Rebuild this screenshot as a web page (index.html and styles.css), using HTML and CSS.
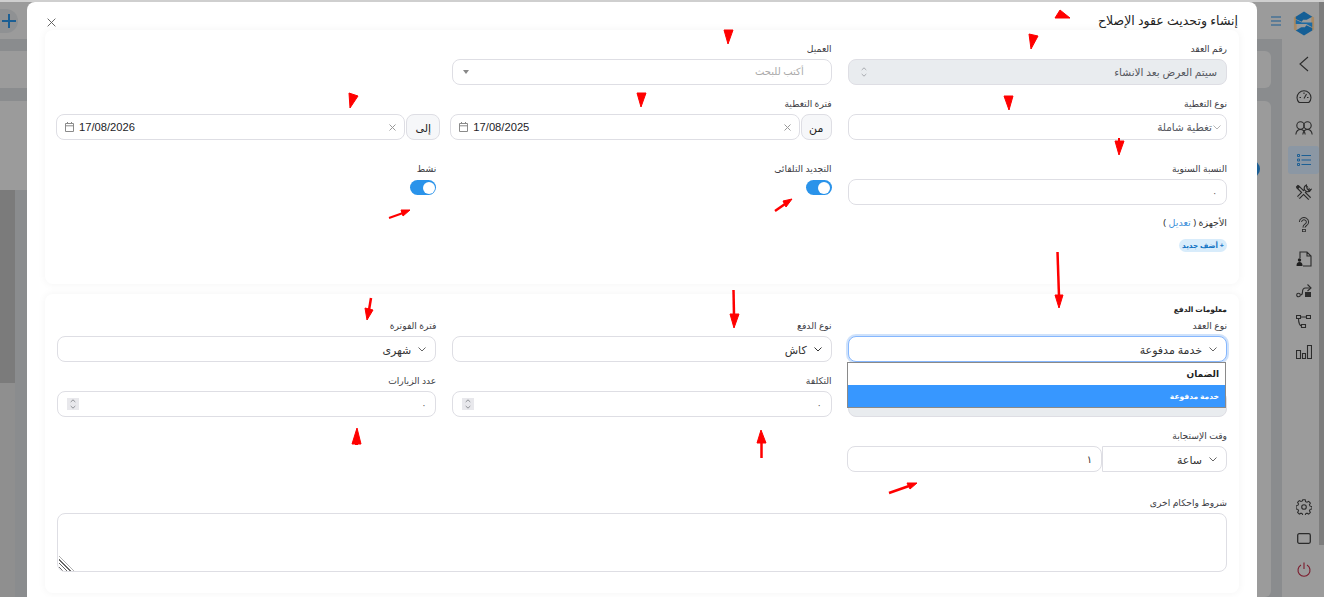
FILE: index.html
```html
<!DOCTYPE html>
<html lang="ar">
<head>
    <meta charset="utf-8" />
    <title>عقود الإصلاح</title>
    <link rel="stylesheet" href="styles.css">
</head>
<body>
<div class="app">
    <div class="main">
        <div class="topbar">
            <div class="add-btn"><svg width="16" height="16" viewBox="0 0 16 16"><path d="M8 1v14M1 8h14" stroke="#1c5f94" stroke-width="2" fill="none"/></svg></div>
            <svg class="burger" width="12" height="10" viewBox="0 0 12 10"><path d="M1 1h10M1 5h10M1 9h10" stroke="#1c5f94" stroke-width="1.2" fill="none"/></svg>
        </div>
        <div class="main-body">
            <div class="bg-card bg-card-top"></div>
            <div class="bg-card bg-card-big">
                <div class="bg-block"></div>
                <div class="bg-lower"></div>
                <div class="bg-strip"></div>
                <div class="bg-dot"></div>
            </div>
        </div>
    </div>
    <div class="side">
        <div class="side-logo">
            <svg width="22" height="25" viewBox="0 0 24 26">
                <path d="M1 6.500l3-2v17l-3-2zM23 6.500l-3-2v17l3-2z" fill="#a98a63"/>
                <path d="M3 5.500L12 0l9 5.500-6 3.500H11L9.500 11 3 8zM21 20.500L12 26l-9-5.500 6-3.500h4l1.500-2 6.500 3z" fill="#155f96"/>
                <path d="M3 9l6.500 3h11.500v5l-6.500-3.500H3z" fill="#1c6aa3"/>
            </svg>
        </div>
        <div class="side-item"><svg width="14" height="16" viewBox="0 0 14 16"><path d="M11 1L3 8l8 7" class="ic"/></svg></div>
        <div class="side-item"><svg width="16" height="15" viewBox="0 0 16 15"><path d="M3.200 13.500a7 6.800 0 1 1 9.600 0zM8 9.500l2.500-4.500M3.500 8.500h1.500M11 8.500h1.500M8 3.500v1.500" class="ic"/></svg></div>
        <div class="side-item"><svg width="18" height="14" viewBox="0 0 18 14"><circle cx="5.500" cy="4.500" r="3.700" class="ic"/><circle cx="12.500" cy="4.500" r="3.700" class="ic"/><path d="M.8 13.500C1.300 10 3 8.500 5.500 8.500S9.700 10 10.200 13.500M7.800 13.500C8.300 10 10 8.500 12.500 8.500s4.200 1.500 4.700 5" class="ic"/></svg></div>
        <div class="side-item side-active"><svg width="14" height="12" viewBox="0 0 14 12"><path d="M4.500 1.500H14M4.500 6H14M4.500 10.500H14" stroke="#1c5f94" stroke-width="1.200" fill="none"/><path d="M.5.500h2v2h-2zM.5 5h2v2h-2zM.5 9.500h2v2h-2z" stroke="#1c5f94" fill="none"/></svg></div>
        <div class="side-item"><svg width="17" height="17" viewBox="0 0 15 15">
            <path d="M2 2l11 11M12 3L3 12" stroke="#2b2b2b" stroke-width="3.400" fill="none"/>
            <path d="M2 2l11 11M12 3L3 12" stroke="#9b9b9b" stroke-width="1.400" fill="none"/>
            <path d="M10 .8a3.500 3.500 0 0 0-1.500 4.500l1.300 1.200a3.500 3.500 0 0 0 4.500-1.800l-2.300.8-1.300-1.300z" fill="#9b9b9b" stroke="#2b2b2b"/>
            <path d="M.7 2.500L2.500.7l2 2-1.800 1.800z" fill="#2b2b2b"/>
        </svg></div>
        <div class="side-item"><svg width="12" height="15" viewBox="0 0 12 15">
            <path d="M2.500 5a3.500 3.300 0 1 1 5.300 2.800C6.500 8.600 6 9.200 6 10.500" stroke="#2b2b2b" stroke-width="3.200" fill="none"/>
            <path d="M2.500 5a3.500 3.300 0 1 1 5.300 2.800C6.500 8.600 6 9.200 6 10.500" stroke="#9b9b9b" stroke-width="1.300" fill="none"/>
            <rect x="4.500" y="12.500" width="3" height="2.200" fill="none" stroke="#2b2b2b" stroke-width=".8"/>
        </svg></div>
        <div class="side-item side-nudge"><svg width="16" height="16" viewBox="0 0 16 16"><path d="M4 7V1h7l4 4v10H7M11 1v4h4" class="ic"/><circle cx="3.500" cy="9" r="1.700" fill="#1f1f1f"/><path d="M.500 15c0-3 1-4 3-4s3 1 3 4z" fill="#1f1f1f"/></svg></div>
        <div class="side-item side-nudge"><svg width="16" height="16" viewBox="0 0 16 16"><circle cx="2.500" cy="12" r="1.800" class="ic"/><path d="M4.500 12c1.500 0 2-1 2-3s.5-4 3-4h4M11.500 1.500l3.500 3.500-3.500 3" class="ic"/><rect x="9" y="9" width="6" height="5" fill="#2b2b2b"/></svg></div>
        <div class="side-item side-nudge-small"><svg width="15" height="13" viewBox="0 0 15 13"><path d="M.5.500h4v3h-4zM10.500.500h4v3h-4zM5.500 9.500h4v3h-4zM4.500 2h6M2.500 3.500C2.500 8 4 11 5.500 11" class="ic"/></svg></div>
        <div class="side-item"><svg width="16" height="14" viewBox="0 0 16 14"><path d="M.5 5.500h4v8h-4zM6.500 8.500h3v5h-3zM11.500.5h4v13h-4z" class="ic"/></svg></div>
        <div class="side-spacer"></div>
        <div class="side-item side-tight"><svg width="16" height="16" viewBox="0 0 16 16"><circle cx="8" cy="8" r="2.300" class="ic"/><path d="M6.700.6h2.600l.4 2 1.500.7 1.800-1 1.800 1.800-1 1.800.7 1.500 2 .4v2.600l-2 .4-.7 1.500 1 1.800-1.800 1.800-1.800-1-1.500.7-.4 1.900H6.700l-.4-1.900-1.500-.7-1.800 1-1.800-1.800 1-1.800-.7-1.500-1.900-.4V7l1.900-.4.7-1.500-1-1.800 1.800-1.800 1.800 1 1.500-.7z" class="ic" transform="scale(.94) translate(.5 .2)"/></svg></div>
        <div class="side-item side-tight"><svg width="14" height="11" viewBox="0 0 14 11"><rect x=".7" y=".7" width="12.600" height="9.600" rx="1.500" fill="none" stroke="#2b2b2b" stroke-width="1.300"/></svg></div>
        <div class="side-item side-tight"><svg width="14" height="15" viewBox="0 0 14 15"><path d="M4 3a6 6 0 1 0 6 0M7 .5V7" fill="none" stroke="#7c1a2c" stroke-width="1.100"/></svg></div>
    </div>
    <div class="scroll-track"><div class="scroll-thumb"></div></div>
</div>

<div class="modal" dir="rtl">
    <div class="modal-head">
        <h1 class="modal-title">إنشاء وتحديث عقود الإصلاح</h1>
        <svg class="close" width="9" height="9" viewBox="0 0 10 10"><path d="M.7.7l8.600 8.600M9.300.7L.7 9.300" stroke="#555" fill="none"/></svg>
    </div>

    <div class="card card-first">
        <div class="form-grid">
            <div class="field">
                <label class="lbl">رقم العقد</label>
                <div class="ctl ctl-disabled">
                    <span class="muted">سيتم العرض بعد الانشاء</span>
                    <svg class="spin-plain" width="6" height="10" viewBox="0 0 6 10"><path d="M.7 3L3 .8 5.300 3M.7 7L3 9.200 5.300 7" stroke="#a8abb0" fill="none"/></svg>
                </div>
            </div>
            <div class="field">
                <label class="lbl">العميل</label>
                <div class="ctl ctl-client">
                    <span class="placeholder">أكتب للبحث</span>
                    <span class="caret"></span>
                </div>
            </div>
            <div class="field"></div>

            <div class="field date-row">
                <label class="lbl">نوع التغطية</label>
                <div class="ctl ctl-short">
                    <svg class="chev chev-light" width="8" height="5" viewBox="0 0 8 5"><path d="M.5.500L4 4 7.500.500"/></svg>
                    <span class="muted">تغطية شاملة</span>
                </div>
            </div>
            <div class="field date-row">
                <label class="lbl">فترة التغطية</label>
                <div class="group group-mid">
                    <span class="addon">من</span>
                    <div class="ctl ctl-date">
                        <svg class="clear" width="7" height="7" viewBox="0 0 7 7"><path d="M.5.500l6 6M6.500.500l-6 6"/></svg>
                        <span class="date">17/08/2025</span>
                        <svg width="9" height="10" viewBox="0 0 9 10"><path d="M.5 1.500h8v8h-8zM.5 3.800h8M2.500 0v2M6.500 0v2" stroke="#8a8a8a" fill="none"/></svg>
                    </div>
                </div>
            </div>
            <div class="field date-row">
                <label class="lbl">&nbsp;</label>
                <div class="group group-end">
                    <span class="addon addon-wide">إلى</span>
                    <div class="ctl ctl-date">
                        <svg class="clear" width="7" height="7" viewBox="0 0 7 7"><path d="M.5.500l6 6M6.500.500l-6 6"/></svg>
                        <span class="date">17/08/2026</span>
                        <svg width="9" height="10" viewBox="0 0 9 10"><path d="M.5 1.500h8v8h-8zM.5 3.800h8M2.500 0v2M6.500 0v2" stroke="#8a8a8a" fill="none"/></svg>
                    </div>
                </div>
            </div>

            <div class="field">
                <label class="lbl">النسبة السنوية</label>
                <div class="ctl"><span class="zero">٠</span></div>
            </div>
            <div class="field">
                <label class="lbl">التجديد التلقائى</label>
                <div class="toggle"><span class="knob"></span></div>
            </div>
            <div class="field">
                <label class="lbl">نشط</label>
                <div class="toggle"><span class="knob"></span></div>
            </div>
        </div>
        <div class="devices">
            <div class="devices-title">الأجهزة ( <a class="link">تعديل</a> )</div>
            <span class="chip">+ أضف جديد</span>
        </div>
    </div>

    <div class="card card-second">
        <div class="section-title">معلومات الدفع</div>
        <div class="form-grid">
            <div class="field field-pop">
                <label class="lbl">نوع العقد</label>
                <div class="ctl ctl-focus">
                    <svg class="chev" width="8" height="5" viewBox="0 0 8 5"><path d="M.5.500L4 4 7.500.500"/></svg>
                    <span class="val">خدمة مدفوعة</span>
                </div>
                <div class="popup">
                    <div class="opt">الضمان</div>
                    <div class="opt opt-on">خدمة مدفوعة</div>
                </div>
            </div>
            <div class="field">
                <label class="lbl">نوع الدفع</label>
                <div class="ctl">
                    <svg class="chev chev-dark" width="8" height="5" viewBox="0 0 8 5"><path d="M.5.500L4 4 7.500.500"/></svg>
                    <span class="val">كاش</span>
                </div>
            </div>
            <div class="field">
                <label class="lbl">فترة الفوترة</label>
                <div class="ctl">
                    <svg class="chev" width="8" height="5" viewBox="0 0 8 5"><path d="M.5.500L4 4 7.500.500"/></svg>
                    <span class="val">شهرى</span>
                </div>
            </div>

            <div class="field">
                <label class="lbl">&nbsp;</label>
                <div class="ctl ctl-disabled"></div>
            </div>
            <div class="field">
                <label class="lbl">التكلفة</label>
                <div class="ctl">
                    <span class="zero">٠</span>
                    <span class="spin"><svg width="6" height="10" viewBox="0 0 6 10"><path d="M.7 3L3 .8 5.300 3M.7 7L3 9.200 5.300 7" stroke="#8f9196" fill="none"/></svg></span>
                </div>
            </div>
            <div class="field">
                <label class="lbl">عدد الزيارات</label>
                <div class="ctl">
                    <span class="zero">٠</span>
                    <span class="spin"><svg width="6" height="10" viewBox="0 0 6 10"><path d="M.7 3L3 .8 5.300 3M.7 7L3 9.200 5.300 7" stroke="#8f9196" fill="none"/></svg></span>
                </div>
            </div>

            <div class="field date-row">
                <label class="lbl">وقت الإستجابة</label>
                <div class="group group-time">
                    <div class="ctl ctl-unit">
                        <svg class="chev" width="8" height="5" viewBox="0 0 8 5"><path d="M.5.500L4 4 7.500.500"/></svg>
                        <span class="val">ساعة</span>
                    </div>
                    <div class="ctl ctl-hours"><span class="one">١</span></div>
                </div>
            </div>
        </div>
        <div class="field field-notes">
            <label class="lbl">شروط واحكام اخرى</label>
            <div class="notes"><span class="grip"></span></div>
        </div>
    </div>
</div>

<svg class="marks" width="1324" height="597" viewBox="0 0 1324 597">
    <g fill="#f00" stroke="#f00">
        <polygon points="1055,18 1060,10 1070,18"/>
        <polygon points="1029,34 1038,36 1031,49"/>
        <polygon points="1004,96 1013,96 1009,110"/>
        <polygon points="1115,141 1124,141 1119,155"/>
        <line x1="1119" y1="138" x2="1119" y2="142" stroke-width="2"/>
        <polygon points="724,30 733,30 728,44"/>
        <polygon points="637,93 646,93 641,107"/>
        <polygon points="349,93 358,96 350,108"/>
        <polygon points="783,201 792,199 786,207"/>
        <line x1="775" y1="211" x2="785" y2="204" stroke-width="2.500"/>
        <polygon points="401,210 410,210 403,216"/>
        <line x1="389" y1="218" x2="403" y2="213" stroke-width="2"/>
        <polygon points="1055,295 1063,295 1059,308"/>
        <line x1="1057.500" y1="252" x2="1059" y2="296" stroke-width="2.500"/>
        <polygon points="730,314 739,314 734,328"/>
        <line x1="733.500" y1="290" x2="734" y2="315" stroke-width="2.500"/>
        <polygon points="365,308 373,310 367,320"/>
        <line x1="371" y1="298" x2="369" y2="310" stroke-width="2.500"/>
        <polygon points="757,443 766,443 761,430"/>
        <line x1="761.500" y1="443" x2="761.500" y2="458" stroke-width="2.500"/>
        <polygon points="352,444 361,444 357,428"/>
        <line x1="356.500" y1="444" x2="356.500" y2="445" stroke-width="3"/>
        <polygon points="907,483 917,483 910,489"/>
        <line x1="889" y1="493" x2="909" y2="486" stroke-width="2.500"/>
    </g>
</svg>
</body>
</html>
```

FILE: styles.css
```css
*{
    box-sizing:border-box;
    padding:0;
    margin:0;
}
html,body{
    height:597px;
    overflow:hidden;
}
body{
    background:#9b9b9b;
    font-family:"Noto Sans","Inter","DejaVu Sans",sans-serif;
    border-top:2px solid #cfcfcf;
}
.app{
    display:flex;
    height:595px;
    direction:ltr;
}
.main{
    flex:1;
    display:flex;
    flex-direction:column;
}
.topbar{
    height:37px;
    display:flex;
    align-items:center;
    justify-content:space-between;
}
.add-btn{
    width:18px;
    height:24px;
    display:flex;
    align-items:center;
    justify-content:center;
    background:#8f9193;
    border-radius:0 12px 12px 0;
}
.main-body{
    flex:1;
    background:#8a8c8e;
    padding:12px 11px 0 0;
    display:flex;
    flex-direction:column;
    gap:13px;
}
.bg-card{
    background:#9b9b9b;
    border-radius:0 6px 6px 0;
}
.bg-card-top{
    height:37px;
}
.bg-card-big{
    flex:1;
    position:relative;
}
.bg-block{
    position:absolute;
    left:0;
    top:89px;
    width:15px;
    height:193px;
    background:#7b7b7b;
}
.bg-lower{
    position:absolute;
    left:0;
    top:282px;
    bottom:0;
    width:15px;
    background:#8f8f8f;
}
.bg-strip{
    position:absolute;
    left:15px;
    top:89px;
    bottom:0;
    width:12px;
    background:#8a8c8e;
}
.bg-dot{
    position:absolute;
    right:11px;
    top:59px;
    width:18px;
    height:18px;
    border-radius:50%;
    background:#1c5f94;
}
.side{
    width:37px;
    display:flex;
    flex-direction:column;
    align-items:flex-end;
    padding-bottom:11px;
}
.side-logo{
    width:31px;
    height:37px;
    padding-top:5px;
    display:flex;
    align-items:center;
    justify-content:center;
}
.side-item{
    width:31px;
    height:28px;
    margin-bottom:4px;
    display:flex;
    align-items:center;
    justify-content:center;
    border-radius:3px;
    flex:none;
}
.side-logo + .side-item{
    margin-top:11px;
}
.side-active{
    background:#8b97a4;
}
.side-nudge{
    padding-top:6px;
}
.side-nudge-small{
    padding-top:2px;
}
.side-tight{
    margin-bottom:3px;
}
.side-spacer{
    flex:1;
}
.ic{
    fill:none;
    stroke:#2b2b2b;
    stroke-width:1.100;
}
.scroll-track{
    width:5px;
    background:#9b9b9b;
}
.scroll-thumb{
    height:543px;
    background:#7d7d7d;
}

/* modal */
.modal{
    position:absolute;
    left:27px;
    top:2px;
    width:1230px;
    height:595px;
    overflow:hidden;
    background:#fff;
    border-radius:8px 8px 0 0;
    padding:0 18px;
}
.modal-head{
    height:28px;
    display:flex;
    align-items:center;
    justify-content:space-between;
    padding-top:8px;
}
.modal-title{
    font-size:12.500px;
    font-weight:400;
    color:#222;
    margin-right:1px;
}
.close{
    margin-left:2px;
    margin-top:4px;
}
.card{
    background:#fff;
    border-radius:8px;
    box-shadow:0 0 8px rgba(0,0,0,0.05);
    padding:12px;
}
.card-first{
    height:254px;
    margin-bottom:10px;
}
.card-second{
    height:299px;
}
.form-grid{
    display:grid;
    grid-template-columns:repeat(3,1fr);
    column-gap:16px;
    row-gap:12px;
}
.lbl{
    display:block;
    height:17px;
    font-size:9.200px;
    line-height:13px;
    color:#3c3c44;
}
.ctl{
    height:26px;
    border:1px solid #dedee4;
    border-radius:8px;
    background:#fff;
    display:flex;
    align-items:center;
    padding:0 9px 0 12px;
    font-size:11px;
    color:#333;
}
.ctl-disabled{
    background:#e9ecef;
    justify-content:space-between;
}
.muted{
    color:#55585f;
    font-size:10.500px;
}
.ctl-client{
    justify-content:space-between;
    padding:0 27px 0 10px;
}
.placeholder{
    color:#aaa;
    font-size:10px;
    margin-bottom:3px;
}
.caret{
    width:0;
    height:0;
    border:3px solid transparent;
    border-top:4px solid #888;
    border-bottom:0;
}
.ctl-short{
    padding-right:5px;
}
.chev{
    fill:none;
    stroke:#666;
    margin-left:7px;
}
.chev-light{
    stroke:#b5b5b5;
    margin-left:1px;
}
.chev-dark{
    stroke:#333;
}
.val{
    font-size:11px;
    color:#333;
}
.date-row{
    margin-bottom:10px;
}
.group{
    display:flex;
    gap:1px;
}
.group-mid{
    margin-left:-2px;
}
.group-end{
    margin-right:-4px;
    margin-left:-1px;
}
.addon{
    width:31px;
    height:26px;
    flex:none;
    display:flex;
    align-items:center;
    justify-content:center;
    background:#f6f7f9;
    border:1px solid #dedee4;
    border-radius:8px;
    font-size:11px;
    color:#222;
}
.addon-wide{
    width:34px;
}
.ctl-date{
    flex:1;
    justify-content:flex-start;
    padding:0 8px;
}
.clear{
    fill:none;
    stroke:#999;
    margin-left:auto;
}
.date{
    font-family:"Liberation Sans",sans-serif;
    font-size:11.200px;
    color:#1d1d28;
    direction:ltr;
    margin-left:5px;
}
.zero{
    font-size:9px;
    color:#555;
}
.toggle{
    width:26px;
    height:15px;
    margin-top:1px;
    border-radius:8px;
    background:#2a93ea;
    display:flex;
    align-items:center;
    padding:0 1.500px;
}
.knob{
    width:12px;
    height:12px;
    border-radius:50%;
    background:#fff;
}
.devices{
    margin-top:11px;
}
.devices-title{
    font-size:9.500px;
    color:#333;
    height:15px;
}
.link{
    color:#3d8fd9;
}
.chip{
    display:inline-block;
    height:13px;
    line-height:12px;
    padding:0 3px;
    border-radius:7px;
    background:#d8ecfb;
    color:#1474c4;
    font-size:7.200px;
    font-weight:700;
}
.section-title{
    font-size:7.500px;
    font-weight:700;
    line-height:6px;
    height:13px;
    color:#222;
}
.field-pop{
    position:relative;
}
.ctl-focus{
    border-color:#86b7fe;
    box-shadow:0 0 0 2px #cfe2fb;
}
.popup{
    position:absolute;
    top:43px;
    right:1px;
    left:-1px;
    height:46px;
    background:#fff;
    border:1px solid #8a8a8a;
    z-index:2;
}
.opt{
    height:22px;
    line-height:22px;
    padding:0 6px;
    font-size:9px;
    font-weight:700;
    color:#222;
}
.opt-on{
    background:#3797ff;
    color:#fff;
    font-size:7.500px;
}
.spin{
    width:12px;
    height:12px;
    margin-right:auto;
    margin-left:-3px;
    background:#e8e8ec;
    display:flex;
    align-items:center;
    justify-content:center;
}
.group-time{
    gap:0;
    margin-left:-1px;
}
.ctl-unit{
    width:125px;
    flex:none;
    border-radius:0 8px 8px 0;
}
.ctl-hours{
    flex:1;
    border-radius:8px;
}
.one{
    font-size:10px;
    color:#333;
}
.field-notes{
    margin-top:14px;
}
.notes{
    height:59px;
    border:1px solid #dedee4;
    border-radius:8px;
    position:relative;
    overflow:hidden;
}
.grip{
    position:absolute;
    left:1px;
    bottom:0;
    width:15px;
    height:15px;
    background:repeating-linear-gradient(45deg,#666 0,#666 1px,#fff 1px,#fff 2.500px);
    clip-path:polygon(0 0,100% 100%,0 100%);
}
.marks{
    position:absolute;
    left:0;
    top:0;
    pointer-events:none;
}
```
